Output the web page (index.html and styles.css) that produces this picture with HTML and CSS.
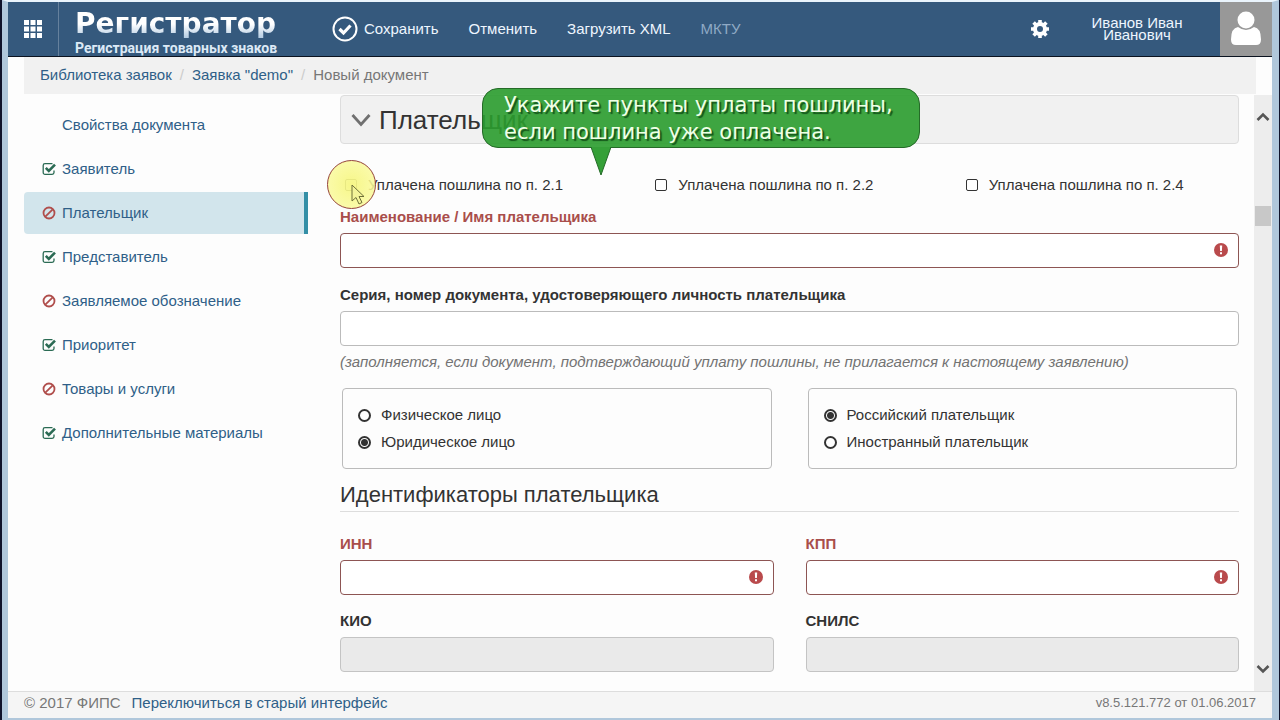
FILE: index.html
```html
<!DOCTYPE html>
<html lang="ru">
<head>
<meta charset="utf-8">
<meta name="viewport" content="width=device-width, initial-scale=1">
<title>Регистратор</title>
<link rel="stylesheet" href="styles.css">
</head>
<body>
<svg class="sprite" aria-hidden="true">
  <symbol id="i-check" viewBox="0 0 14 14"><path d="M10.5 1.6H3A1.8 1.8 0 0 0 1.2 3.400v7.200A1.8 1.8 0 0 0 3 12.400h7.200a1.8 1.8 0 0 0 1.8-1.8V8.500" fill="none" stroke="currentColor" stroke-width="1.3"/><path d="M3.800 5.800l3 3 6.200-6.200" fill="none" stroke="currentColor" stroke-width="2.600"/></symbol>
  <symbol id="i-ban" viewBox="0 0 14 14"><circle cx="7" cy="7" r="5.500" fill="none" stroke="currentColor" stroke-width="1.8"/><path d="M3.300 10.700l7.400-7.400" stroke="currentColor" stroke-width="1.8"/></symbol>
  <symbol id="i-error" viewBox="0 0 14 14"><circle cx="7" cy="7" r="7" fill="currentColor"/><path d="M5.800 2.600h2.400L7.900 8H6.100zM6 9.200h2v2H6z" fill="#fff"/></symbol>
</svg>
<div class="window">
  <header class="topbar">
    <button class="apps" type="button" aria-label="Приложения">
      <svg width="18" height="18" viewBox="0 0 18 18" fill="#fff"><path d="M0 0h5v5H0zM6.500 0h5v5h-5zM13 0h5v5h-5zM0 6.500h5v5H0zM6.500 6.500h5v5h-5zM13 6.500h5v5h-5zM0 13h5v5H0zM6.500 13h5v5h-5zM13 13h5v5h-5z"/></svg>
    </button>
    <a class="brand" href="#"><span class="brand-name">Регистратор</span><span class="brand-sub">Регистрация товарных знаков</span></a>
    <nav class="menu">
      <button type="button" class="menu-item menu-save"><svg width="26" height="26" viewBox="0 0 26 26" fill="none" stroke="#fff"><circle cx="13" cy="13" r="11.500" stroke-width="2"/><path d="M7.500 13l4 4 7-7.500" stroke-width="3.200"/></svg>Сохранить</button>
      <button type="button" class="menu-item">Отменить</button>
      <button type="button" class="menu-item">Загрузить XML</button>
      <button type="button" class="menu-item" disabled>МКТУ</button>
    </nav>
    <button class="gear" type="button" aria-label="Настройки">
      <svg width="18" height="18" viewBox="0 0 18 18"><circle cx="9" cy="9" r="5" fill="none" stroke="#fff" stroke-width="4"/><path d="M9 0v4M9 14v4M0 9h4M14 9h4M2.600 2.600l3 3M12.400 12.400l3 3M15.400 2.600l-3 3M5.600 12.400l-3 3" stroke="#fff" stroke-width="3.600"/></svg>
    </button>
    <span class="user">Иванов Иван Иванович</span>
    <span class="avatar"><svg width="32" height="36" viewBox="0 0 32 36" fill="#fff"><circle cx="16" cy="9" r="8.500"/><path d="M8 16q8 6 16 0 7 1 7 12.500 0 5.500-5 5.500H6q-5 0-5-5.500Q1 17 8 16z"/></svg></span>
  </header>

  <nav class="crumbs" aria-label="Навигация">
    <a href="#">Библиотека заявок</a><span class="slash">/</span><a href="#">Заявка "demo"</a><span class="slash">/</span><span>Новый документ</span>
  </nav>

  <div class="body">
    <nav class="side">
      <a class="side-item" href="#"><span class="icon"></span>Свойства документа</a>
      <a class="side-item" href="#"><svg class="icon ok"><use href="#i-check"/></svg>Заявитель</a>
      <a class="side-item active" href="#"><svg class="icon bad"><use href="#i-ban"/></svg>Плательщик</a>
      <a class="side-item" href="#"><svg class="icon ok"><use href="#i-check"/></svg>Представитель</a>
      <a class="side-item" href="#"><svg class="icon bad"><use href="#i-ban"/></svg>Заявляемое обозначение</a>
      <a class="side-item" href="#"><svg class="icon ok"><use href="#i-check"/></svg>Приоритет</a>
      <a class="side-item" href="#"><svg class="icon bad"><use href="#i-ban"/></svg>Товары и услуги</a>
      <a class="side-item" href="#"><svg class="icon ok"><use href="#i-check"/></svg>Дополнительные материалы</a>
    </nav>

    <form class="form">
      <h1 class="panel-title"><svg width="20" height="14" viewBox="0 0 20 14"><path d="M1.500 2L10 11.500 18.500 2" fill="none" stroke="#707070" stroke-width="2.800"/></svg>Плательщик</h1>
      <div class="checks">
        <label class="choice check"><input type="checkbox">Уплачена пошлина по п. 2.1</label>
        <label class="choice check"><input type="checkbox">Уплачена пошлина по п. 2.2</label>
        <label class="choice check"><input type="checkbox">Уплачена пошлина по п. 2.4</label>
      </div>
      <div class="field invalid">
        <label for="name">Наименование / Имя плательщика</label>
        <div class="control"><input id="name" type="text"><svg class="error-icon"><use href="#i-error"/></svg></div>
      </div>
      <div class="field">
        <label for="series">Серия, номер документа, удостоверяющего личность плательщика</label>
        <div class="control"><input id="series" type="text"></div>
        <p class="help">(заполняется, если документ, подтверждающий уплату пошлины, не прилагается к настоящему заявлению)</p>
      </div>
      <div class="groups">
        <div class="group" role="radiogroup">
          <label class="choice"><input type="radio" name="kind">Физическое лицо</label>
          <label class="choice"><input type="radio" name="kind" checked>Юридическое лицо</label>
        </div>
        <div class="group" role="radiogroup">
          <label class="choice"><input type="radio" name="origin" checked>Российский плательщик</label>
          <label class="choice"><input type="radio" name="origin">Иностранный плательщик</label>
        </div>
      </div>
      <h2 class="section-title">Идентификаторы плательщика</h2>
      <div class="pair">
        <div class="field invalid">
          <label for="inn">ИНН</label>
          <div class="control"><input id="inn" type="text"><svg class="error-icon"><use href="#i-error"/></svg></div>
        </div>
        <div class="field invalid">
          <label for="kpp">КПП</label>
          <div class="control"><input id="kpp" type="text"><svg class="error-icon"><use href="#i-error"/></svg></div>
        </div>
        <div class="field">
          <label for="kio">КИО</label>
          <div class="control"><input id="kio" type="text" disabled></div>
        </div>
        <div class="field">
          <label for="snils">СНИЛС</label>
          <div class="control"><input id="snils" type="text" disabled></div>
        </div>
      </div>
      <div class="callout" role="status">Укажите пункты уплаты пошлины,<br>если пошлина уже оплачена.
        <svg class="callout-tail" width="22" height="30" viewBox="0 0 22 30"><path d="M1 0l10 28L21 0" fill="#35a038" stroke="#256b28"/></svg>
      </div>
      <div class="pointer"><svg width="14" height="22" viewBox="0 0 14 22"><path d="M1 1v16l4-3.500 3 6.500 3-1.500-3-6h5z" fill="#f4f498" stroke="#6f7038"/></svg></div>
    </form>

    <div class="scroll" aria-hidden="true">
      <svg width="14" height="10" viewBox="0 0 14 10"><path d="M1.500 8L7 2.500 12.500 8" fill="none" stroke="#555" stroke-width="2.600"/></svg>
      <div class="track"><div class="thumb"></div></div>
      <svg width="14" height="10" viewBox="0 0 14 10"><path d="M1.500 2L7 7.500 12.500 2" fill="none" stroke="#555" stroke-width="2.600"/></svg>
    </div>
  </div>

  <footer class="foot">
    <span>© 2017 ФИПС</span><a href="#">Переключиться в старый интерфейс</a><span class="version">v8.5.121.772 от 01.06.2017</span>
  </footer>
</div>
</body>
</html>
```
FILE: styles.css
```css
* { box-sizing: border-box; }
body {
  margin: 0;
  background: #10132b;
  color: #333;
  font: 15px/20px "Liberation Sans", Arial, sans-serif;
}
a { color: #2f5f88; text-decoration: none; }
button { font: inherit; color: inherit; background: none; border: 0; padding: 0; }
.sprite { position: absolute; width: 0; height: 0; }

.window {
  min-height: 100vh;
  margin: 0 1px 0 2px;
  border: solid #b0c7db;
  border-width: 2px 7px 2px 6px;
  border-top-color: #eaf4fc;
  background: #fdfdfd;
  display: flex;
  flex-direction: column;
}

.topbar {
  display: flex;
  align-items: center;
  height: 55px;
  background: #35597d;
  border-bottom: 1px solid #0b1320;
  color: #eef6ff;
}
.apps {
  align-self: stretch;
  width: 51px;
  border-right: 1px solid #66819d;
  display: flex;
  align-items: center;
  justify-content: center;
}
.brand { display: flex; flex-direction: column; gap: 3px; margin: 6px 0 0 16px; width: 257px; }
.brand-name {
  font: bold 28px/28px "DejaVu Sans", sans-serif;
  background: linear-gradient(#fff 50%, #b3cbe2);
  -webkit-background-clip: text;
  background-clip: text;
  color: transparent;
}
.brand-sub { font: bold 14px/14px Roboto, Arial, sans-serif; color: #dce9f6; }
.menu { display: flex; gap: 30px; flex: 1; }
.menu-item { display: flex; align-items: center; gap: 6px; }
.menu-item:disabled { color: #8fa9c4; }
.gear { display: flex; margin-right: 33px; }
.user { width: 110px; margin-right: 28px; text-align: center; line-height: 12px; }
.avatar {
  align-self: stretch;
  width: 52px;
  background: #989898;
  display: flex;
  align-items: center;
  justify-content: center;
}

.crumbs {
  height: 37px;
  margin: 0 16px;
  padding: 8px 16px;
  background: #f1f1f1;
  color: #777;
}
.slash { color: #ccc; padding: 0 8px; }

.body { flex: 1; display: flex; }
.side { width: 284px; margin: 10px 32px 0 16px; display: flex; flex-direction: column; gap: 2px; }
.side-item {
  display: flex;
  align-items: center;
  gap: 6px;
  height: 42px;
  padding-left: 18px;
  border-radius: 4px 0 0 4px;
}
.side-item.active { background: #d2e5ec; border-right: 4px solid #348fa6; }
.icon { width: 14px; height: 14px; }
.ok { color: #2b6b54; }
.bad { color: #b04e4c; }

.form { position: relative; flex: 1; margin: 1px 15px 19px 0; }
.panel-title {
  display: flex;
  align-items: center;
  gap: 8px;
  height: 49px;
  margin: 0 0 31px;
  padding: 0 10px;
  background: #f1f1f1;
  border: 1px solid #ddd;
  border-radius: 4px;
  font-size: 26px;
  font-weight: normal;
}
.checks { display: grid; grid-template-columns: repeat(3, 1fr); gap: 32px; margin-bottom: 12px; }
.choice { display: flex; align-items: center; gap: 10px; }
.choice input {
  appearance: none;
  width: 13px;
  height: 13px;
  margin: 0;
  border: 2px solid #333;
  border-radius: 50%;
  background: #fff;
}
.choice input:checked { background: radial-gradient(#333 3px, #fff 4px); }
.check { padding-left: 5px; gap: 11px; }
.check input { width: 12px; height: 12px; border-width: 1px; border-radius: 2px; }

.field label { display: block; margin-bottom: 6px; font-weight: bold; }
.field { margin-bottom: 17px; }
.control { position: relative; }
.control input {
  display: block;
  width: 100%;
  height: 35px;
  padding: 0 12px;
  border: 1px solid #bbb;
  border-radius: 4px;
  background: #fff;
  font: inherit;
}
.control input:disabled { background: #eaeaea; border-color: #c4c4c4; }
.invalid label { color: #a94e4b; }
.invalid input { border-color: #8d5553; }
.error-icon { position: absolute; right: 11px; top: 10px; width: 14px; height: 14px; color: #b94a4c; }
.help { margin: 6px 0 0; color: #737373; font-style: italic; }

.groups { display: grid; grid-template-columns: 1fr 1fr; gap: 36px; margin: 0 2px 14px; }
.field + .groups { margin-top: -1px; }
.group {
  display: flex;
  flex-direction: column;
  gap: 7px;
  padding: 16px 15px;
  border: 1px solid #bbb;
  border-radius: 4px;
}
.section-title {
  margin: 0 0 22px;
  padding-bottom: 4px;
  border-bottom: 1px solid #ddd;
  font-size: 22px;
  line-height: 24px;
  font-weight: normal;
}
.pair { display: grid; grid-template-columns: 1fr 1fr; gap: 16px 32px; }
.pair .field { margin: 0; }

.callout {
  position: absolute;
  left: 142px;
  top: -7px;
  width: 438px;
  padding: 3px 0 1px 21px;
  border: 1px solid #256b28;
  border-radius: 16px;
  background: rgba(42, 156, 46, .9);
  color: #efffe6;
  font: 21px/27px "DejaVu Sans", Verdana, sans-serif;
  text-shadow: 2px 2px 1px #14551a;
  white-space: nowrap;
}
.callout-tail { position: absolute; left: 107px; top: 100%; }
.pointer {
  position: absolute;
  left: -13px;
  top: 65px;
  width: 49px;
  height: 49px;
  padding: 23px 0 0 23px;
  border: 1px solid #95443a;
  border-radius: 50%;
  background: radial-gradient(rgba(246, 246, 130, .95), rgba(252, 252, 165, .8));
}

.scroll {
  width: 18px;
  margin-top: 1px;
  padding: 17px 2px;
  background: #ededed;
  display: flex;
  flex-direction: column;
  align-items: center;
}
.track { flex: 1; align-self: stretch; margin: 0 -1px; padding-top: 84px; }
.thumb { height: 20px; background: #c8c8c8; }

.foot {
  display: flex;
  gap: 11px;
  height: 27px;
  padding: 1px 16px 0;
  background: #f5f5f5;
  border-top: 1px solid #ddd;
  color: #777;
}
.version { margin-left: auto; font-size: 13px; }
```
